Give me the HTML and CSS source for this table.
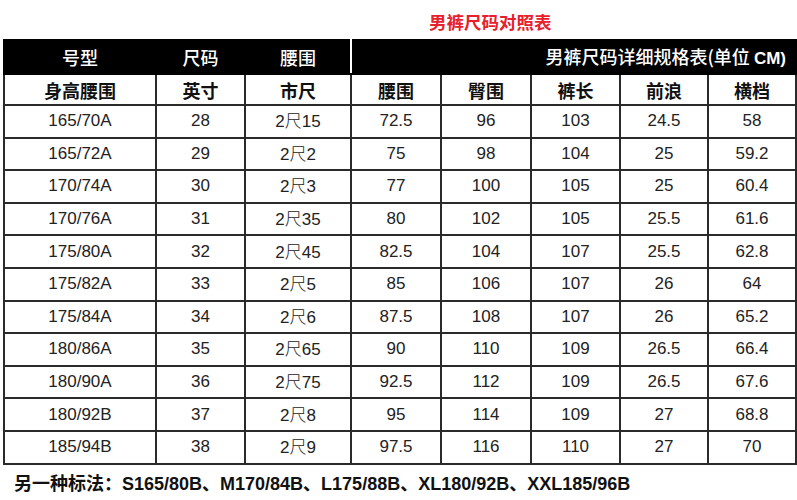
FILE: index.html
```html
<!DOCTYPE html>
<html lang="zh-CN">
<head>
<meta charset="utf-8">
<title>男裤尺码对照表</title>
<link rel="stylesheet" href="styles.css">
</head>
<body>
<div class="title">男裤尺码对照表</div>
<table class="size-table">
  <colgroup>
    <col class="c1"><col class="c2"><col class="c3"><col class="c4"><col class="c5"><col class="c6"><col class="c7"><col class="c8">
  </colgroup>
  <thead>
    <tr class="head-black">
      <th>号型</th>
      <th>尺码</th>
      <th class="sep">腰围</th>
      <th colspan="5" class="wide">男裤尺码详细规格表(单位 <span class="cm">CM)</span></th>
    </tr>
    <tr class="head-white">
      <th>身高腰围</th><th>英寸</th><th>市尺</th><th>腰围</th><th>臀围</th><th>裤长</th><th>前浪</th><th>横档</th>
    </tr>
  </thead>
  <tbody>
    <tr><td>165/70A</td><td>28</td><td>2<span class="chi">尺</span>15</td><td>72.5</td><td>96</td><td>103</td><td>24.5</td><td>58</td></tr>
    <tr><td>165/72A</td><td>29</td><td>2<span class="chi">尺</span>2</td><td>75</td><td>98</td><td>104</td><td>25</td><td>59.2</td></tr>
    <tr><td>170/74A</td><td>30</td><td>2<span class="chi">尺</span>3</td><td>77</td><td>100</td><td>105</td><td>25</td><td>60.4</td></tr>
    <tr><td>170/76A</td><td>31</td><td>2<span class="chi">尺</span>35</td><td>80</td><td>102</td><td>105</td><td>25.5</td><td>61.6</td></tr>
    <tr><td>175/80A</td><td>32</td><td>2<span class="chi">尺</span>45</td><td>82.5</td><td>104</td><td>107</td><td>25.5</td><td>62.8</td></tr>
    <tr><td>175/82A</td><td>33</td><td>2<span class="chi">尺</span>5</td><td>85</td><td>106</td><td>107</td><td>26</td><td>64</td></tr>
    <tr><td>175/84A</td><td>34</td><td>2<span class="chi">尺</span>6</td><td>87.5</td><td>108</td><td>107</td><td>26</td><td>65.2</td></tr>
    <tr><td>180/86A</td><td>35</td><td>2<span class="chi">尺</span>65</td><td>90</td><td>110</td><td>109</td><td>26.5</td><td>66.4</td></tr>
    <tr><td>180/90A</td><td>36</td><td>2<span class="chi">尺</span>75</td><td>92.5</td><td>112</td><td>109</td><td>26.5</td><td>67.6</td></tr>
    <tr><td>180/92B</td><td>37</td><td>2<span class="chi">尺</span>8</td><td>95</td><td>114</td><td>109</td><td>27</td><td>68.8</td></tr>
    <tr><td>185/94B</td><td>38</td><td>2<span class="chi">尺</span>9</td><td>97.5</td><td>116</td><td>110</td><td>27</td><td>70</td></tr>
  </tbody>
</table>
<div class="note"><span class="note-label">另一种标法：</span><span class="note-sizes">S165/80B、M170/84B、L175/88B、XL180/92B、XXL185/96B</span></div>
</body>
</html>
```
FILE: styles.css
```css
html, body {
  margin: 0;
  padding: 0;
  background: #ffffff;
}
body {
  width: 797px;
  height: 500px;
  overflow: hidden;
  font-family: "Liberation Sans", "Noto Sans CJK SC", sans-serif;
  color: #1e1e1e;
}
.title {
  height: 39px;
  box-sizing: border-box;
  padding-left: 429px;
  padding-top: 10px;
  font-family: "Noto Sans CJK SC", sans-serif;
  font-weight: 700;
  font-size: 17.5px;
  line-height: 24px;
  color: #e8202c;
}
.size-table {
  margin-left: 3px;
  width: 792px;
  table-layout: fixed;
  border-collapse: collapse;
}
.c1 { width: 152px; }
.c2 { width: 89px; }
.c3 { width: 106px; }
.c4 { width: 90px; }
.c5 { width: 90px; }
.c6 { width: 89px; }
.c7 { width: 88px; }
.c8 { width: 88px; }
.size-table th,
.size-table td {
  border: 2px solid #2a2a2a;
  padding: 0;
  text-align: center;
  vertical-align: middle;
}
.head-black th {
  background: #000000;
  color: #ffffff;
  border-color: #000000;
  height: 32px;
  font-family: "Noto Sans CJK SC", sans-serif;
  font-weight: 500;
  font-size: 18px;
  line-height: 20px;
}
.head-black th.sep {
  border-right: 2px solid #ffffff;
}
.head-black th.wide {
  text-align: right;
  padding-right: 9px;
}
.cm {
  font-family: "Liberation Sans", sans-serif;
  font-weight: 700;
  font-size: 17px;
}
.head-white th {
  height: 29px;
  font-family: "Noto Sans CJK SC", sans-serif;
  font-weight: 700;
  font-size: 18px;
  line-height: 20px;
  color: #111111;
}
.size-table td {
  height: 30.6px;
  font-size: 17px;
  line-height: 20px;
  color: #222222;
}
.chi {
  font-family: "Noto Sans CJK SC", sans-serif;
  font-weight: 300;
  font-size: 17px;
}
.note {
  padding-left: 14px;
  padding-top: 6px;
  font-size: 18px;
  line-height: 22px;
  font-weight: 700;
  color: #111111;
}
.note-label {
  font-family: "Noto Sans CJK SC", sans-serif;
}
.note-sizes {
  font-family: "Liberation Sans", "Noto Sans CJK SC", sans-serif;
}
```
